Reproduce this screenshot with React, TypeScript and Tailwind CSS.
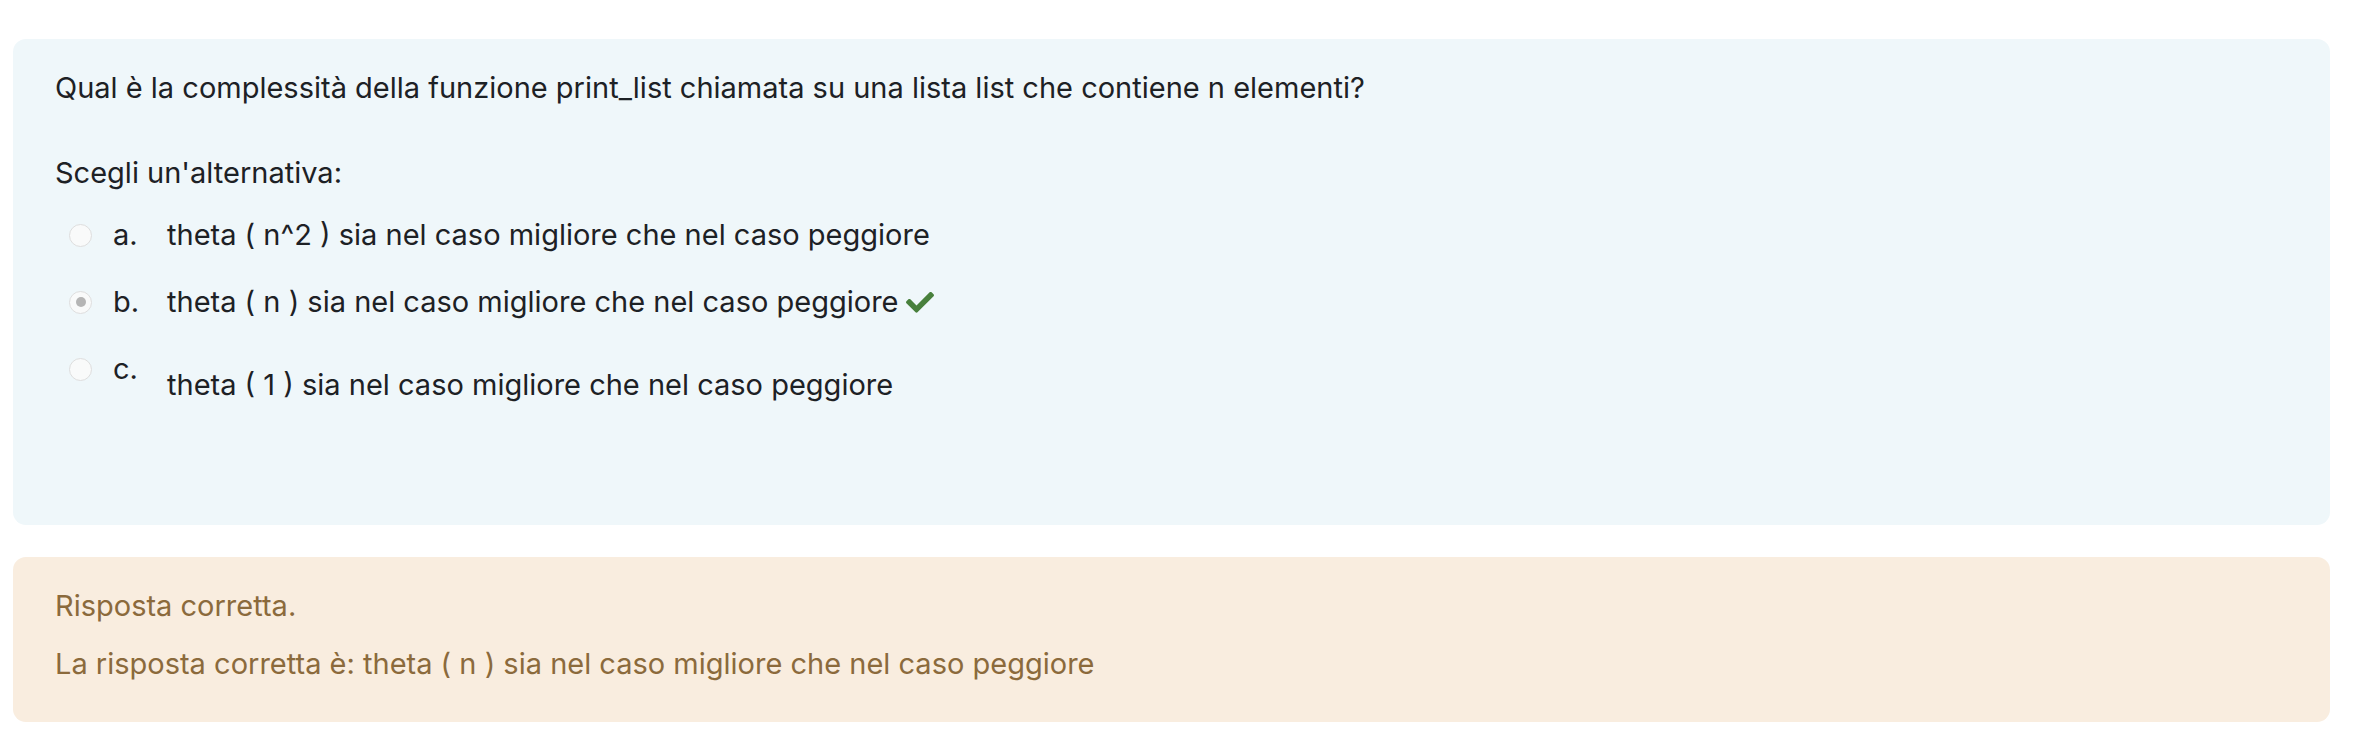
import React from 'react';

const options = [
  { key: 'a', text: 'theta ( n^2 ) sia nel caso migliore che nel caso peggiore', checked: false, correct: false },
  { key: 'b', text: 'theta ( n ) sia nel caso migliore che nel caso peggiore', checked: true, correct: true },
  { key: 'c', text: 'theta ( 1 ) sia nel caso migliore che nel caso peggiore', checked: false, correct: false, offset: true },
];

function Radio({ checked }: { checked: boolean }) {
  return (
    <span className="flex h-[23px] w-[23px] shrink-0 items-center justify-center rounded-full border border-[#dedede] bg-[#f9fafa]">
      {checked && <span className="h-[10px] w-[10px] rounded-full bg-[#b5b5b5]" />}
    </span>
  );
}

function Check() {
  return (
    <svg width="28" height="22" viewBox="0 0 512 400" className="ml-[8px] inline-block" aria-hidden>
      <path
        fill="#48803c"
        d="M173.9 389.4L7.5 223c-10-10-10-26.2 0-36.2l36.2-36.2c10-10 26.2-10 36.2 0L192 262.7 432.1 22.6c10-10 26.2-10 36.2 0l36.2 36.2c10 10 10 26.2 0 36.2L210.1 389.4c-10 10-26.2 10-36.2 0z"
      />
    </svg>
  );
}

export default function App() {
  return (
    <div className="min-h-[750px] bg-white pt-[39px] pl-[13px] pr-[42px] text-[29px] leading-[40px] text-[#1d2125]" style={{ fontFamily: 'Inter, Roboto, "Liberation Sans", sans-serif' }}>
      <div className="h-[486px] rounded-[13px] bg-[#eff7fa] px-[42px] pt-[29px]">
        <p>Qual è la complessità della funzione print_list chiamata su una lista list che contiene n elementi?</p>
        <p className="mt-[45px]">Scegli un'alternativa:</p>
        <div className="mt-[22px] flex flex-col pl-[14px]">
          {options.map(opt => (
            <div key={opt.key} className="flex h-[67px] items-start">
              <div className="flex h-[40px] items-center">
                <Radio checked={opt.checked} />
              </div>
              <span className="ml-[21px] w-[54px]">{opt.key}.</span>
              <span className={opt.offset ? 'flex items-center pt-[16px]' : 'flex items-center'}>
                {opt.text}
                {opt.correct && <Check />}
              </span>
            </div>
          ))}
        </div>
      </div>
      <div className="mt-[32px] h-[165px] rounded-[13px] bg-[#f9eddf] px-[42px] pt-[29px] text-[#8b6a3c]">
        <p>Risposta corretta.</p>
        <p className="mt-[18px]">La risposta corretta è: theta ( n ) sia nel caso migliore che nel caso peggiore</p>
      </div>
    </div>
  );
}
